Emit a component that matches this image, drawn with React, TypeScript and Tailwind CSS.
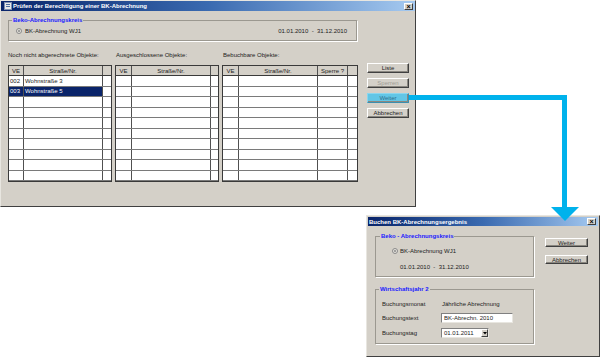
import React from "react";

const FONT = "font-['Liberation_Sans',Arial,sans-serif]";

function CloseBtn() {
  return (
    <div className="w-[9px] h-[7px] bg-[#d4d0c8] border border-t-white border-l-white border-r-[#404040] border-b-[#404040] flex items-center justify-center">
      <span className="text-[7px] leading-none font-bold text-black">×</span>
    </div>
  );
}

function TitleBar({ title, icon, h }: { title: string; icon?: boolean; h: string }) {
  return (
    <div className={`${h} w-full bg-linear-to-r from-[#0a246a] via-[#3a6ab0] to-[#a6caf0] flex items-center pl-[1px] pr-[2px]`}>
      {icon && (
        <svg width="8" height="8" viewBox="0 0 8 8" className="ml-[2px] mr-[1px]">
          <rect x="0.5" y="0.5" width="7" height="7" fill="#e8e8e8" stroke="#8090b0" />
          <rect x="2" y="2" width="4" height="1" fill="#5070a0" />
          <rect x="2" y="4" width="4" height="1" fill="#5070a0" />
        </svg>
      )}
      <span className="text-[6px] leading-none font-bold text-white whitespace-nowrap">{title}</span>
      <div className="ml-auto">
        <CloseBtn />
      </div>
    </div>
  );
}

function Btn({ label, w, h, variant }: { label: string; w: string; h: string; variant?: "disabled" | "active" }) {
  const base =
    variant === "active"
      ? "bg-[#62c6e6] border-[#8ad6ee] border-r-[#3a8fb0] border-b-[#3a8fb0] text-[#2f6f8c]"
      : variant === "disabled"
      ? "bg-[#d4d0c8] border-t-white border-l-white border-r-[#404040] border-b-[#404040] text-[#a09d96]"
      : "bg-[#d4d0c8] border-t-white border-l-white border-r-[#404040] border-b-[#404040] text-[#222]";
  return (
    <div className={`${w} ${h} border ${base} flex items-center justify-center text-[6px] leading-none shadow-[inset_-1px_-1px_0_#8a8780]`}>
      {label}
    </div>
  );
}

function Radio() {
  return (
    <span className="w-[6px] h-[6px] rounded-full border border-[#8a8a8a] bg-[#e4e2dc] flex items-center justify-center">
      <span className="w-[2px] h-[2px] rounded-full bg-[#8a8a8a]" />
    </span>
  );
}

type Col = { w: string; head: string };

function Table({ cols, rows, selected }: { cols: Col[]; rows: string[][]; selected?: number }) {
  const data: string[][] = [];
  for (let i = 0; i < 10; i++) data.push(rows[i] || cols.map(() => ""));
  return (
    <div className="mt-[6px] w-full h-[117px] border border-[#3a3a3a] bg-white flex flex-col overflow-hidden">
      <div className="h-[10px] flex bg-[#d4d0c8] border-b border-[#3a3a3a]">
        {cols.map((c, i) => (
          <div
            key={i}
            className={`${c.w} h-full flex items-center justify-center text-[6px] leading-none text-[#222] ${
              i < cols.length - 1 ? "border-r border-[#505050]" : ""
            }`}
          >
            {c.head}
          </div>
        ))}
      </div>
      {data.map((r, ri) => (
        <div key={ri} className="h-[10.5px] shrink-0 flex border-b border-[#7a7a7a]">
          {cols.map((c, i) => {
            const sel = selected === ri && i < cols.length - 1;
            return (
              <div
                key={i}
                className={`${c.w} h-full flex items-center pl-[1px] text-[6px] leading-none whitespace-nowrap ${
                  sel ? "bg-[#0a246a] text-white" : "text-[#222]"
                } ${i < cols.length - 1 ? "border-r border-[#505050]" : ""}`}
              >
                {r[i]}
              </div>
            );
          })}
        </div>
      ))}
    </div>
  );
}

export default function App() {
  return (
    <div className={`relative w-[600px] h-[357px] bg-white overflow-hidden ${FONT}`}>
      {/* Main window */}
      <div className="absolute left-0 top-0 w-[416px] h-[207px] bg-[#d4d0c8] border border-t-[#e8e6e0] border-l-[#e8e6e0] border-r-[#404040] border-b-[#404040] flex flex-col">
        <TitleBar title="Prüfen der Berechtigung einer BK-Abrechnung" icon h="h-[10px]" />
        <div className="pl-[7px] flex flex-col">
          <fieldset className="mt-[5px] w-[349px] h-[25px] border border-[#9b9890] shadow-[1px_1px_0_#fff]">
            <legend className="ml-[3px] px-[1px] text-[6px] leading-[8px] font-bold text-[#1a1aff]">
              Beko-Abrechnungskreis
            </legend>
            <div className="mt-[3px] h-[8px] flex items-center text-[6px] leading-none text-[#222]">
              <span className="ml-[7px]">
                <Radio />
              </span>
              <span className="ml-[3px]">BK-Abrechnung WJ1</span>
              <span className="ml-auto mr-[9px]">01.01.2010&nbsp;&nbsp;-&nbsp;&nbsp;31.12.2010</span>
            </div>
          </fieldset>

          <div className="mt-[10px] flex">
            <div className="w-[104px] flex flex-col">
              <div className="h-[8px] text-[6px] leading-[8px] text-[#222] whitespace-nowrap">
                Noch nicht abgerechnete Objekte:
              </div>
              <Table
                cols={[
                  { w: "w-[15px]", head: "VE" },
                  { w: "w-[79px]", head: "Straße/Nr." },
                  { w: "flex-1", head: "" },
                ]}
                rows={[
                  ["002", "Wohnstraße 3", ""],
                  ["003", "Wohnstraße 5", ""],
                ]}
                selected={1}
              />
            </div>
            <div className="ml-[3px] w-[104px] flex flex-col">
              <div className="h-[8px] pl-[1px] text-[6px] leading-[8px] text-[#222] whitespace-nowrap">
                Ausgeschlossene Objekte:
              </div>
              <Table
                cols={[
                  { w: "w-[16px]", head: "VE" },
                  { w: "w-[79px]", head: "Straße/Nr." },
                  { w: "flex-1", head: "" },
                ]}
                rows={[]}
              />
            </div>
            <div className="ml-[3px] w-[136px] flex flex-col">
              <div className="h-[8px] pl-[1px] text-[6px] leading-[8px] text-[#222] whitespace-nowrap">
                Bebuchbare Objekte:
              </div>
              <Table
                cols={[
                  { w: "w-[16px]", head: "VE" },
                  { w: "w-[79px]", head: "Straße/Nr." },
                  { w: "w-[30px]", head: "Sperre ?" },
                  { w: "flex-1", head: "" },
                ]}
                rows={[]}
              />
            </div>
            <div className="ml-[9px] w-[42px] pt-[12px] flex flex-col gap-[5px]">
              <Btn label="Liste" w="w-[42px]" h="h-[10px]" />
              <Btn label="Sperren" w="w-[42px]" h="h-[10px]" variant="disabled" />
              <Btn label="Weiter" w="w-[42px]" h="h-[10px]" variant="active" />
              <Btn label="Abbrechen" w="w-[42px]" h="h-[10px]" />
            </div>
          </div>
        </div>
      </div>

      {/* Second window */}
      <div className="absolute left-[366px] top-[215px] w-[234px] h-[142px] bg-[#d4d0c8] border border-t-[#e8e6e0] border-l-[#e8e6e0] border-r-[#404040] border-b-[#404040] p-[1px] flex flex-col">
        <TitleBar title="Buchen BK-Abrechnungsergebnis" h="h-[9px]" />
        <div className="pl-[7px] flex flex-col">
          <div className="flex">
            <fieldset className="mt-[6px] w-[159px] h-[45px] border border-[#9b9890] shadow-[1px_1px_0_#fff]">
              <legend className="ml-[4px] px-[1px] text-[6px] leading-[8px] font-bold text-[#1a1aff]">
                Beko - Abrechnungskreis
              </legend>
              <div className="mt-[7px] h-[8px] flex items-center text-[6px] leading-none text-[#222]">
                <span className="ml-[16px]">
                  <Radio />
                </span>
                <span className="ml-[2px]">BK-Abrechnung WJ1</span>
              </div>
              <div className="mt-[8px] h-[8px] pl-[24px] flex items-center text-[6px] leading-none text-[#222] whitespace-nowrap">
                01.01.2010&nbsp;&nbsp;-&nbsp;&nbsp;31.12.2010
              </div>
            </fieldset>
            <div className="ml-[11px] pt-[12px] flex flex-col gap-[8px]">
              <Btn label="Weiter" w="w-[43px]" h="h-[9px]" />
              <Btn label="Abbrechen" w="w-[43px]" h="h-[9px]" />
            </div>
          </div>

          <fieldset className="mt-[8px] w-[159px] h-[59px] border border-[#9b9890] shadow-[1px_1px_0_#fff]">
            <legend className="ml-[3px] px-[1px] text-[6px] leading-[8px] font-bold text-[#1a1aff]">
              Wirtschaftsjahr 2
            </legend>
            <div className="mt-[6px] h-[10px] pl-[6px] flex items-center text-[6px] leading-none text-[#222]">
              <span className="w-[59px]">Buchungsmonat</span>
              <span className="pl-[1px]">Jährliche Abrechnung</span>
            </div>
            <div className="mt-[4px] h-[10px] pl-[6px] flex items-center text-[6px] leading-none text-[#222]">
              <span className="w-[59px]">Buchungstext</span>
              <div className="w-[72px] h-[10px] bg-white border border-t-[#808080] border-l-[#808080] border-r-[#e8e6e0] border-b-[#e8e6e0] flex items-center pl-[2px]">
                BK-Abrechn. 2010
              </div>
            </div>
            <div className="mt-[5px] h-[10px] pl-[6px] flex items-center text-[6px] leading-none text-[#222]">
              <span className="w-[59px]">Buchungstag</span>
              <div className="w-[48px] h-[10px] bg-white border border-t-[#808080] border-l-[#808080] border-r-[#e8e6e0] border-b-[#e8e6e0] flex items-center">
                <span className="pl-[2px] flex-1">01.01.2011</span>
                <div className="w-[7px] h-full bg-[#d4d0c8] border border-t-white border-l-white border-r-[#404040] border-b-[#404040] flex items-center justify-center">
                  <svg width="4" height="3" viewBox="0 0 4 3">
                    <path d="M0 0 L4 0 L2 2.5 Z" fill="#000" />
                  </svg>
                </div>
              </div>
            </div>
          </fieldset>
        </div>
      </div>

      {/* Arrow overlay */}
      <svg className="absolute left-0 top-0 pointer-events-none" width="600" height="357" viewBox="0 0 600 357">
        <rect x="409" y="95" width="158" height="5" fill="#00b2ec" />
        <rect x="562" y="95" width="5" height="113" fill="#00b2ec" />
        <path d="M551 207 L579 207 L565 221 Z" fill="#00b2ec" />
      </svg>
    </div>
  );
}
